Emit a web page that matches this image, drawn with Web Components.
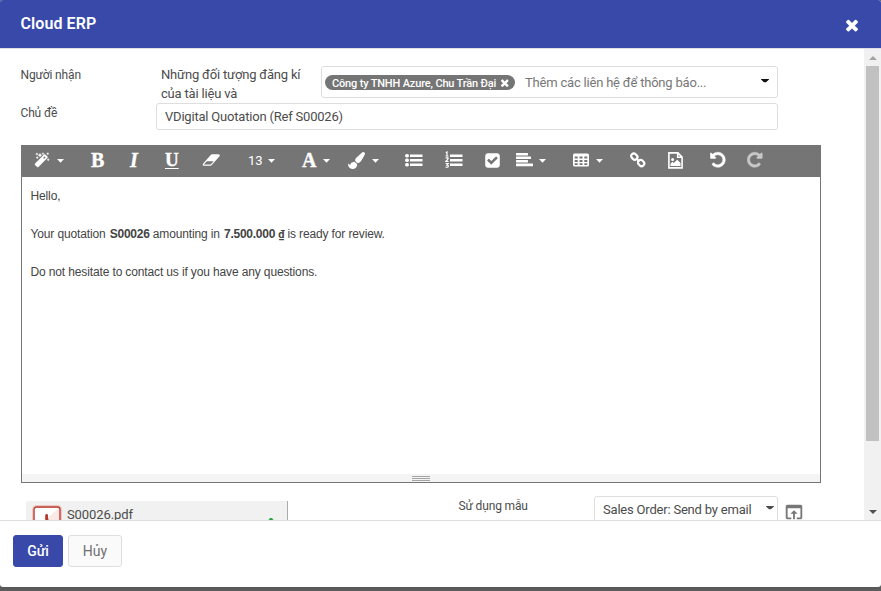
<!DOCTYPE html>
<html lang="vi">
<head>
<meta charset="utf-8">
<title>Cloud ERP</title>
<style>
html,body{margin:0;height:100%;background:#5e5e5e;overflow:hidden}
body{font-family:Roboto,"Noto Sans",sans-serif;font-size:13px;color:#4c4c4c}
</style>
</head>
<body>
<erp-dialog></erp-dialog>
<script>
const define = (name, html) => customElements.define(name, class extends HTMLElement {
  constructor() {
    super();
    const t = document.createElement('template');
    t.innerHTML = html;
    this.attachShadow({mode: 'open'}).append(t.content.cloneNode(true));
  }
});

const TIMES = '<path d="M1490 1322q0 40-28 68l-136 136q-28 28-68 28t-68-28l-294-294-294 294q-28 28-68 28t-68-28l-136-136q-28-28-28-68t28-68l294-294-294-294q-28-28-28-68t28-68l136-136q28-28 68-28t68 28l294 294 294-294q28-28 68-28t68 28l136 136q28 28 28 68t-28 68l-294 294 294 294q28 28 28 68z"/>';
const UNDO = 'M1664 896q0 156-61 298t-164 245-245 164-298 61q-172 0-327-72.5t-264-204.5q-7-10-6.5-22.5t8.5-20.5l137-138q10-9 25-9 16 2 23 12 73 95 179 147t225 52q104 0 198.5-40.5t163.5-109.5 109.5-163.5 40.5-198.5-40.5-198.5-109.5-163.5-163.5-109.5-198.5-40.5q-98 0-188 35.5t-160 101.5l137 138q31 30 14 69-17 40-59 40h-448q-26 0-45-19t-19-45v-448q0-42 40-59 39-17 69 14l130 129q107-101 244.5-156.5t284.5-55.5q156 0 298 61t245 164 164 245 61 298z';
// name: [width, height, viewBox, shapes]
const ICONS = {
  times: [18, 18, '0 0 1792 1792', TIMES],
  timesSmall: [11.5, 11.5, '0 0 1792 1792', TIMES],
  magic: [16, 16, '0 0 16 16', '<path d="M11.2 2.6l2.2 2.2a.8.8 0 0 1 0 1L4.3 14.9a.8.8 0 0 1-1 0L1 12.7a.8.8 0 0 1 0-1L10.200 2.600a.8.8 0 0 1 1 0zM8.900 5.900l1.200 1.200 1.700-1.700-1.200-1.200z" fill-rule="evenodd" stroke="currentColor" stroke-width=".4"/><path d="M2.900.8l.4.9.9.4-.9.3-.4.9-.3-.9-.9-.3.9-.4zM6 1.300l.6 1.300 1.300.6-1.300.6L6 5.100l-.6-1.300-1.300-.6 1.300-.6zM9 .6l.3.800.8.3-.8.3L9 2.800l-.3-.8-.8-.3.8-.3zM3.200 4.400l.3.900.9.3-.9.3-.3.900-.3-.9L2 5.600l.9-.3zM13.800.500l.3.900.9.3-.9.3-.3.900-.3-.9-.9-.3.9-.3zM14.200 6.500l.3.900.9.300-.9.300-.3.9-.3-.9-.9-.3.9-.3z" stroke="currentColor" stroke-width=".4"/>'],
  eraser: [18.500, 16, '0 0 2048 1792', '<path d="M960 1408l336-384h-768l-336 384h768zm1013-1077q15 34 9.500 71.500t-30.500 65.500l-896 1024q-38 44-96 44h-768q-38 0-69.500-20.500t-47.500-54.500q-15-34-9.500-71.500t30.500-65.500l896-1024q38-44 96-44h768q38 0 69.500 20.500t47.500 54.500z"/>'],
  brush: [17, 17, '0 0 1792 1792', '<path d="M1615 0q70 0 122 46.500t52 116.500q0 63-45 151-332 629-465 752-97 91-218 91-126 0-216.500-92.500t-90.500-219.500q0-128 92-212l638-579q59-54 131-54zm-909 1034q39 76 106.500 130t150.500 76l1 71q4 213-129.500 347t-348.500 134q-123 0-218-46.500t-152.500-127.500-86.500-183-29-220q7 5 41 30t62 44.500 59 36.500 46 17q41 0 55-37 25-66 57.500-112.500t69.500-76 88-47.500 103-25.500 125-10.500z"/>'],
  ul: [18, 16, '0 0 18 16', '<rect y="2" width="4" height="3.500" rx="1.700"/><rect y="6.500" width="4" height="3.500" rx="1.700"/><rect y="11" width="4" height="3.500" rx="1.700"/><path d="M5 2.500h12.500v2.500H5zM5 7h12.500v2.500H5zM5 11.500h12.500v2.500H5z"/>'],
  ol: [18, 18, '0 0 18 18', '<path d="M5 3.500h12.500v2.500H5zM5 8h12.500v2.500H5zM5 12.500h12.500v2.500H5z"/><path d="M.8 1.800l1.200-.8v4M.5 5h3M.6 7.200q2.700-1.200 2.500.3Q2.800 8.600.8 10.500h2.700M.6 12.500h2.600l-1.300 1.600q1.500 0 1.400 1.300-.6 1.300-2.800.6" fill="none" stroke="currentColor" stroke-width="1.200"/>'],
  check: [17, 17, '170 0 1664 1792', '<path d="M813 1299l614-614q19-19 19-45t-19-45l-102-102q-19-19-45-19t-45 19l-467 467-211-211q-19-19-45-19t-45 19l-102 102q-19 19-19 45t19 45l358 358q19 19 45 19t45-19zm851-883v960q0 119-84.500 203.500t-203.500 84.500h-960q-119 0-203.500-84.500t-84.500-203.500v-960q0-119 84.500-203.500t203.500-84.500h960q119 0 203.500 84.500t84.500 203.500z"/>'],
  align: [17, 16, '0 0 17 16', '<rect y="1" width="12" height="2.600" rx=".5"/><rect y="4.600" width="15" height="2.400" rx=".5"/><rect y="8" width="12" height="2.600" rx=".5"/><rect y="11.600" width="17" height="2.600" rx=".5"/>'],
  table: [17, 16, '0 0 17 16', '<path fill-rule="evenodd" d="M1.500 1.500h13a1.500 1.500 0 0 1 1.500 1.500v10a1.500 1.500 0 0 1-1.500 1.500h-13A1.500 1.500 0 0 1 0 13V3a1.500 1.500 0 0 1 1.500-1.500zM1.700 4.500v2h3v-2zM6.500 4.500v2h3v-2zM11.300 4.500v2h3v-2zM1.700 8v2h3V8zM6.500 8v2h3V8zM11.300 8v2h3V8zM1.700 11.300v1.800h3v-1.800zM6.500 11.300v1.800h3v-1.800zM11.300 11.300v1.800h3v-1.800z"/>'],
  link: [16, 16, '0 0 16 16', '<g fill="none" stroke="currentColor" stroke-width="2.200"><rect x="1" y="2" width="6.600" height="5.200" rx="2.500" transform="rotate(45 4.300 4.600)"/><rect x="7.800" y="8.400" width="6.600" height="5.200" rx="2.500" transform="rotate(45 11.100 11)"/></g><path d="M6.300 7.700l1.200-1.200 2.600 2.600-1.200 1.200z"/>'],
  image: [15, 17, '0 0 15 17', '<path d="M.9.900h9l4.200 4.200v10.800H.9zM9.700.900v4.400h4.400" fill="none" stroke="currentColor" stroke-width="1.600"/><circle cx="4.600" cy="7.600" r="1.500"/><path d="M2.500 14v-2.200l2-2 1.300 1.300 3.400-3.400 3.300 3.300v3z"/>'],
  undo: [17.500, 17.500, '100 0 1792 1792', `<path d="${UNDO}" stroke="currentColor" stroke-width="50"/>`],
  redo: [17.500, 17.500, '100 0 1792 1792', `<path transform="matrix(-1 0 0 1 1792 0)" d="${UNDO}" stroke="currentColor" stroke-width="50"/>`],
  caret: [7, 4, '0 0 7 4', '<path d="M0 0h7L3.500 3.800z"/>'],
  caretWide: [8, 4, '0 0 8 4', '<path d="M0 0h8v.5L5 3.300H3L0 .5z"/>'],
  up: [8, 4, '0 0 8 4', '<path d="M0 4h8L4 0z"/>'],
  down: [8, 4, '0 0 8 4', '<path d="M0 0h8L4 4z"/>'],
  open: [22, 22, '0 0 24 24', '<path d="M19 4H5c-1.110 0-2 .9-2 2v12c0 1.100.89 2 2 2h4v-2H5V8h14v10h-4v2h4c1.100 0 2-.9 2-2V6c0-1.100-.89-2-2-2zm-7 6l-4 4h3v6h2v-6h3l-4-4z"/>'],
  pdf: [30, 30, '0 0 30 30', '<rect x="1.500" y="1.500" width="27" height="27" rx="3" fill="#fff" stroke="#edc9c5" stroke-width="3"/><path d="M14 14L27 3v20z" fill="#fae9e7"/><rect x="2" y="2" width="26" height="26" rx="2.500" fill="none" stroke="#bd4035" stroke-width="1.300"/><path d="M14.600 10.500v4q0 4-3 9M14.600 13q1 5 5 8" fill="none" stroke="#b5382d" stroke-width="2.800" stroke-linecap="round"/>'],
  mark: [8, 8, '0 0 8 8', '<path d="M3 0h2l3 4v1H0V4z"/>']
};
customElements.define('erp-icon', class extends HTMLElement {
  constructor() { super(); this.attachShadow({mode: 'open'}); }
  connectedCallback() {
    const [w, h, box, shapes] = ICONS[this.getAttribute('name')];
    this.shadowRoot.innerHTML = `<style>:host{display:block;flex:none;line-height:0}svg{display:block;fill:currentColor}</style><svg width="${w}" height="${h}" viewBox="${box}">${shapes}</svg>`;
  }
});

define('erp-header', `<style>
:host{display:flex;box-sizing:border-box;height:49px;flex:none;background:#3849aa;border-bottom:1px solid #dfdfe6;color:#fff;align-items:center;justify-content:space-between;padding:0 20px}
.t{font-size:16px;font-weight:600;line-height:24px;letter-spacing:.08px;margin-left:.5px}erp-icon{margin:2px 0 0}
</style><span class="t"><slot></slot></span><erp-icon name="times"></erp-icon>`);

define('erp-chip', `<style>
:host{display:flex;align-items:center;height:15px;border-radius:8px;background:#757575;color:#fff;padding:0 5px 0 7px;font-size:11px;font-weight:500;white-space:nowrap;width:178px;justify-content:space-between;flex:none}
.t{letter-spacing:-.17px;margin-top:1px}
</style><span class="t"><slot></slot></span><erp-icon name="timesSmall"></erp-icon>`);

define('erp-field', `<style>
:host{display:flex;box-sizing:border-box;align-items:center;border:1px solid #dedede;border-radius:3px;background:#fff;white-space:nowrap;letter-spacing:-.2px}
.c{flex:1;display:flex;align-items:center}
</style><div class="c"><slot></slot></div><slot name="end"></slot>`);

define('erp-toolbar', `<style>
:host{display:grid;grid-template-columns:57px 39px 35px 37px 46px 54px 46px 57px 40px 40px 31px 57px 57px 38px 42px 37px 20px;padding-left:13px;height:32px;box-sizing:border-box;background:#757575;color:#fff;margin:0 -1px;white-space:nowrap}
div{display:flex;align-items:center;height:30px}
.d{gap:7px}
b,i{font:bold 20px/20px "Liberation Serif",serif;-webkit-text-stroke:.35px currentColor}
i{font-style:italic}
.u{text-decoration:underline;text-decoration-thickness:1px;text-underline-offset:2px;font-size:19px}
.n{font-size:13px}
.caret{margin-top:1px}
</style>
<div class="d"><erp-icon name="magic"></erp-icon><erp-icon class="caret" name="caret"></erp-icon></div>
<div><b>B</b></div><div><i>I</i></div><div><b class="u">U</b></div>
<div><erp-icon name="eraser"></erp-icon></div>
<div class="d" style="gap:5px"><span class="n">13</span><erp-icon class="caret" name="caret"></erp-icon></div>
<div class="d"><b>A</b><erp-icon class="caret" name="caret"></erp-icon></div>
<div class="d"><erp-icon name="brush"></erp-icon><erp-icon class="caret" name="caret"></erp-icon></div>
<div><erp-icon name="ul"></erp-icon></div><div><erp-icon name="ol"></erp-icon></div><div><erp-icon name="check"></erp-icon></div>
<div class="d" style="gap:6px"><erp-icon name="align"></erp-icon><erp-icon class="caret" name="caret"></erp-icon></div>
<div class="d" style="gap:6px"><erp-icon name="table"></erp-icon><erp-icon class="caret" name="caret"></erp-icon></div>
<div><erp-icon name="link"></erp-icon></div><div><erp-icon name="image"></erp-icon></div>
<div><erp-icon name="undo"></erp-icon></div><div style="opacity:.6"><erp-icon name="redo"></erp-icon></div>`);

define('erp-editor', `<style>
:host{display:flex;flex-direction:column;box-sizing:border-box;width:800px;height:338px;border:1px solid #757575;border-top:0}
.b{flex:1;padding:10px 8.500px;font:12px/19px "Liberation Sans",Arial,sans-serif;color:#444;letter-spacing:-.133px}
.s{height:8px;background:#f4f4f4;display:flex;flex-direction:column;align-items:center;gap:1px;padding-top:2px;box-sizing:border-box}
.s i{width:18px;height:1px;background:#a5a5a5}
</style><erp-toolbar></erp-toolbar><div class="b"><slot></slot></div><div class="s"><i></i><i></i><i></i></div>`);

define('erp-scrollbar', `<style>
:host{display:flex;flex-direction:column;width:17px;flex:none;background:#f1f1f1;align-items:center}
.e{height:17px;display:flex;align-items:center;justify-content:center;color:#a3a3a3}
.d{color:#505050;margin-top:auto}.k{width:13px;height:375px;background:#c1c1c1}
</style><div class="e"><erp-icon name="up"></erp-icon></div><div class="k"></div><div class="e d"><erp-icon name="down"></erp-icon></div>`);

define('erp-attachment', `<style>
:host{display:flex;box-sizing:border-box;width:262px;height:40px;background:#f1f1f1;border-right:1px solid #aaa;padding:4px 12px 0 6px;gap:5px;margin-left:5px;border-radius:2px 0 0 0;align-items:flex-start}
.t{flex:1;line-height:18px;margin-top:1px;letter-spacing:-.1px}.m{color:#28a745;margin-top:13px}
</style><erp-icon name="pdf"></erp-icon><span class="t"><slot></slot></span><erp-icon class="m" name="mark"></erp-icon>`);

define('erp-button', `<style>
:host{display:flex;box-sizing:border-box;height:32px;align-items:center;justify-content:center;border:1px solid #dedede;border-radius:3px;background:#fafafa;color:#707070;font-size:14px;width:54px}
:host([primary]){width:50px;background:#3849aa;border-color:#3849aa;color:#fff;font-weight:500}
</style><slot></slot>`);

define('erp-dialog', `<style>
:host{display:flex;flex-direction:column;height:587px;background:#fff;border-radius:3px;overflow:hidden;box-shadow:0 1px 3px #555}
.mid{display:flex;height:471px;flex:none;overflow:hidden}
.main{flex:1;height:471px;overflow:hidden;box-sizing:border-box;padding:16px 0 0 21px}
.r1{display:grid;grid-template-columns:140px 160px 457px;height:38px;line-height:19px;white-space:nowrap}
.r1 erp-field{height:32px;margin-top:1px;padding:1px 8px 0 3px}
.desc{letter-spacing:-.18px}
.r2{display:grid;grid-template-columns:135px 622px;line-height:19px}
.r2 erp-field{height:27px;padding-left:8px}
.ph{color:#777;margin-left:10px}
.blk{color:#111;margin-top:-4px}
erp-editor{margin-top:15px}
.lab{font-size:12px;letter-spacing:-.15px;padding-top:1px;margin-left:-.5px}
.low{display:grid;grid-template-columns:438px 135px 184px 30px;padding-top:13px;line-height:19px}
.low erp-attachment{margin-top:5px}
.low erp-field{height:27px;padding:0 3px 0 8px;letter-spacing:-.2px}
.open{color:#777;margin:5px 0 0 5px}
.foot{border-top:1px solid #dedede;display:flex;gap:5px;padding:14px 13px;flex:1}
.p{display:block;height:19px}.gap{margin-bottom:19px}
.p b{letter-spacing:-.27px;margin-left:1px}.cur{font-family:Roboto,sans-serif;font-size:11px}
</style>
<erp-header>Cloud ERP</erp-header>
<div class="mid"><div class="main">
<div class="r1"><span class="lab">Người nhận</span><span class="desc">Những đối tượng đăng kí<br>của tài liệu và</span>
<erp-field><erp-chip>Công ty TNHH Azure, Chu Trần Đại</erp-chip><span class="ph">Thêm các liên hệ để thông báo...</span><erp-icon slot="end" class="blk" name="caretWide"></erp-icon></erp-field></div>
<div class="r2"><span class="lab">Chủ đề</span><erp-field>VDigital Quotation (Ref S00026)</erp-field></div>
<erp-editor><span class="p gap">Hello,</span><span class="p gap">Your quotation <b>S00026</b> amounting in <b>7.500.000&nbsp;<span class="cur">₫</span></b> is ready for review.</span><span class="p">Do not hesitate to contact us if you have any questions.</span></erp-editor>
<div class="low"><erp-attachment>S00026.pdf</erp-attachment><span class="lab">Sử dụng mẫu</span><erp-field>Sales Order: Send by email<erp-icon slot="end" name="caretWide" style="margin-top:-3px"></erp-icon></erp-field><erp-icon class="open" name="open"></erp-icon></div>
</div><erp-scrollbar></erp-scrollbar></div>
<div class="foot"><erp-button primary>Gửi</erp-button><erp-button>Hủy</erp-button></div>`);
</script>
</body>
</html>
